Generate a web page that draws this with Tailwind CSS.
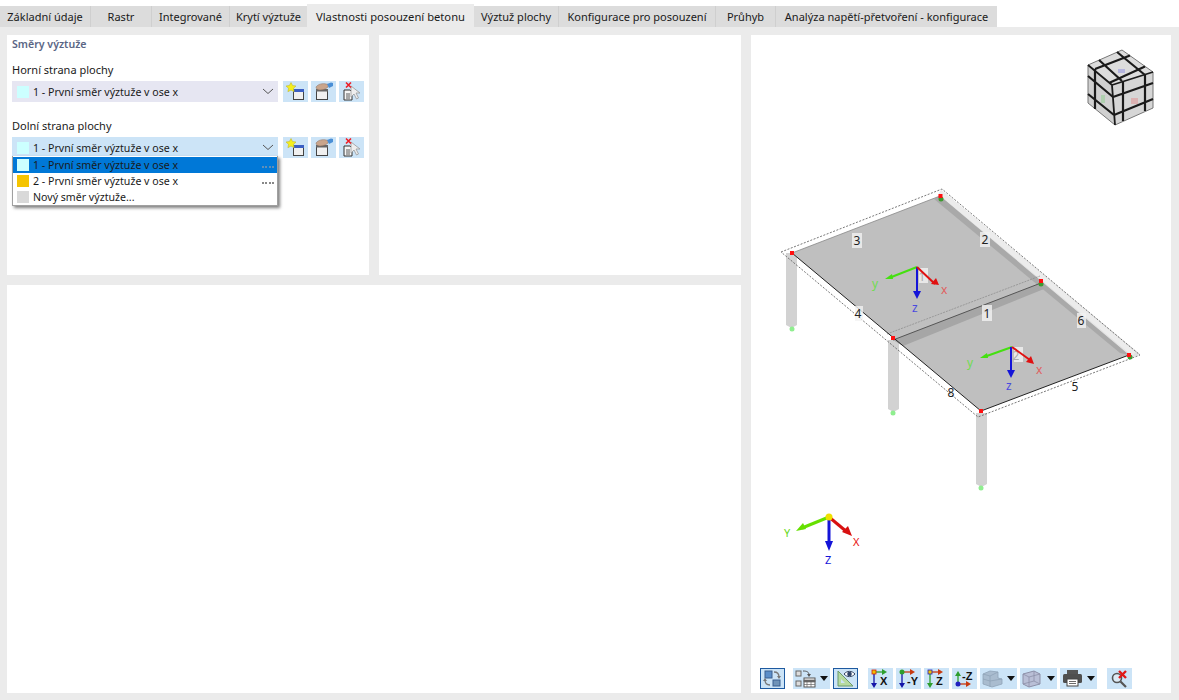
<!DOCTYPE html>
<html>
<head>
<meta charset="utf-8">
<script src="https://cdn.jsdelivr.net/npm/@tailwindcss/browser@4"></script>
</head>
<body class="m-0">
<div class="w-[1179px] h-[700px] flex flex-col bg-white overflow-hidden font-['Noto_Sans','Open_Sans',sans-serif] text-[11px] text-[#1a1a1a]">
  <!-- tabs -->
  <div class="h-[27px] flex items-end shrink-0">
    <div class="w-[91px] h-[21px] pt-[2px] bg-[#dcdcdc] border-r border-[#cfcfcf] flex items-center justify-center">Základní údaje</div>
    <div class="w-[61px] h-[21px] pt-[2px] bg-[#dcdcdc] border-r border-[#cfcfcf] flex items-center justify-center">Rastr</div>
    <div class="w-[78px] h-[21px] pt-[2px] bg-[#dcdcdc] border-r border-[#cfcfcf] flex items-center justify-center">Integrované</div>
    <div class="w-[77px] h-[21px] pt-[2px] bg-[#dcdcdc] flex items-center justify-center">Krytí výztuže</div>
    <div class="w-[167px] h-[23px] pt-[4px] bg-[#ebebeb] flex items-center justify-center text-[11.2px]">Vlastnosti posouzení betonu</div>
    <div class="w-[85px] h-[21px] pt-[2px] bg-[#dcdcdc] border-r border-[#cfcfcf] flex items-center justify-center">Výztuž plochy</div>
    <div class="w-[157px] h-[21px] pt-[2px] bg-[#dcdcdc] border-r border-[#cfcfcf] flex items-center justify-center">Konfigurace pro posouzení</div>
    <div class="w-[60px] h-[21px] pt-[2px] bg-[#dcdcdc] border-r border-[#cfcfcf] flex items-center justify-center">Průhyb</div>
    <div class="w-[221px] h-[21px] pt-[2px] bg-[#dcdcdc] flex items-center justify-center">Analýza napětí-přetvoření - konfigurace</div>
  </div>
  <!-- body -->
  <div class="flex-1 bg-[#ebebeb] flex gap-[10px] pt-[8px] pb-[7px] pl-[7px] pr-[8px]">
    <div class="w-[734px] flex flex-col gap-[10px]">
      <div class="h-[240px] flex gap-[10px]">
        <div class="w-[362px] bg-white relative px-[5px]">
          <div class="h-[17px] pt-[3px] flex items-center font-semibold text-[10.6px] text-[#5a6685]">Směry výztuže</div>
          <div class="mt-[8px] mb-[1px] h-[20px] flex items-center">Horní strana plochy</div>
          <div class="flex gap-[5px]">
            <div class="w-[266px] h-[21px] bg-[#e6e6f2] flex items-center pl-[5px] pr-[4px] text-[10.6px]">
              <span class="w-[12px] h-[12px] bg-[#ccffff] mr-[4px]"></span><span class="flex-1 pt-[2px]">1 - První směr výztuže v ose x</span>
              <svg width="12" height="7" viewBox="0 0 12 7"><path d="M1 1l5 4.500 5-4.500" fill="none" stroke="#555" stroke-width="1"/></svg>
            </div>
            <div class="flex gap-[3px]">
              <div class="w-[25px] h-[21px] bg-[#cce4f7]"><svg width="25" height="21" viewBox="0 0 25 21"><use href="#i-new"/></svg></div>
              <div class="w-[25px] h-[21px] bg-[#cce4f7]"><svg width="25" height="21" viewBox="0 0 25 21"><use href="#i-hand"/></svg></div>
              <div class="w-[25px] h-[21px] bg-[#cce4f7]"><svg width="25" height="21" viewBox="0 0 25 21"><use href="#i-del"/></svg></div>
            </div>
          </div>
          <div class="mt-[13px] mb-[1px] h-[21px] pt-[2px] flex items-center">Dolní strana plochy</div>
          <div class="flex gap-[5px]">
            <div class="w-[266px] h-[21px] bg-[#cce4f7] flex items-center pl-[5px] pr-[4px] text-[10.6px]">
              <span class="w-[12px] h-[12px] bg-[#ccffff] mr-[4px]"></span><span class="flex-1 pt-[2px]">1 - První směr výztuže v ose x</span>
              <svg width="12" height="7" viewBox="0 0 12 7"><path d="M1 1l5 4.500 5-4.500" fill="none" stroke="#555" stroke-width="1"/></svg>
            </div>
            <div class="flex gap-[3px]">
              <div class="w-[25px] h-[21px] bg-[#cce4f7]"><svg width="25" height="21" viewBox="0 0 25 21"><use href="#i-new"/></svg></div>
              <div class="w-[25px] h-[21px] bg-[#cce4f7]"><svg width="25" height="21" viewBox="0 0 25 21"><use href="#i-hand"/></svg></div>
              <div class="w-[25px] h-[21px] bg-[#cce4f7]"><svg width="25" height="21" viewBox="0 0 25 21"><use href="#i-del"/></svg></div>
            </div>
          </div>
          <!-- open dropdown list -->
          <div class="absolute left-[5px] top-[121px] w-[266px] h-[50px] bg-white border border-[#a0a0a0] border-t-0 pt-[1px] text-[10.6px] shadow-[2px_2px_3px_rgba(0,0,0,0.5)]">
            <div class="h-[16px] bg-[#0078d7] flex items-center pl-[4px] relative">
              <span class="w-[12px] h-[12px] bg-[#ccffff] mr-[4px]"></span><span class="pt-[2px]">1 - První směr výztuže v ose x</span>
              <span class="absolute right-[3px] top-[9px] w-[12px] h-[2px] border-t-2 border-dotted border-[#5f8fb8]"></span>
            </div>
            <div class="h-[16px] flex items-center pl-[4px] relative">
              <span class="w-[12px] h-[12px] bg-[#f5c400] mr-[4px]"></span><span class="pt-[2px]">2 - První směr výztuže v ose x</span>
              <span class="absolute right-[3px] top-[9px] w-[12px] h-[2px] border-t-2 border-dotted border-[#888]"></span>
            </div>
            <div class="h-[16px] flex items-center pl-[4px]">
              <span class="w-[12px] h-[12px] bg-[#d9d9d9] mr-[4px]"></span><span class="pt-[2px]">Nový směr výztuže...</span>
            </div>
          </div>
        </div>
        <div class="w-[362px] bg-white"></div>
      </div>
      <div class="flex-1 bg-white"></div>
    </div>
    <!-- right: 3D view -->
    <div class="w-[420px] bg-white flex flex-col">
      <svg class="block shrink-0" width="420" height="633" viewBox="751 35 420 633" font-family="'Noto Sans',sans-serif">
        <!-- columns -->
        <g fill="#d2d2d2">
          <path d="M786 253h11v72l-5.500 3-5.500-3z"/>
          <path d="M888 340h11v69l-5.500 3-5.500-3z"/>
          <path d="M976 413h11v71l-5.500 3-5.500-3z"/>
        </g>
        <g fill="#8fee8f"><circle cx="792" cy="329" r="2.500"/><circle cx="893" cy="413" r="2.500"/><circle cx="981" cy="488" r="2.500"/></g>
        <!-- right edge beam -->
        <path d="M941 190L1140 354L1131 358L938 196z" fill="#e2e2e2"/>
        <!-- slab -->
        <path d="M792 253L940 196L1129 355L981 411z" fill="#bfbfbf"/>
        <path d="M940 196L1129 355L1120 353L934 199z" fill="#a9a9a9"/>
        <path d="M940 192L1134 354" stroke="#ececec" stroke-width="5"/>
        <!-- cross beam -->
        <path d="M893 340L1041 283L1044 289L903 346z" fill="#a6a6a6"/>
        <path d="M893 340L1041 283" stroke="#555" stroke-width="1"/>
        <path d="M887 334L1040 276" stroke="#888" stroke-width="0.700" stroke-dasharray="2 1"/>
        <!-- outlines -->
        <path d="M792 253L981 411L1129 355" fill="none" stroke="#222" stroke-width="1"/>
        <path d="M792 253L940 196" stroke="#888" stroke-width="0.800"/>
        <path d="M781 252L942 189L1140 355L978 417z" fill="none" stroke="#555" stroke-width="0.800" stroke-dasharray="2 1.500"/>
        <!-- nodes -->
        <g fill="#3c9a2e"><circle cx="941" cy="199" r="2.500"/><circle cx="1041" cy="284" r="2.500"/><circle cx="1130" cy="357" r="2.500"/></g>
        <g fill="#ff1010"><rect x="790" y="251" width="4" height="4"/><rect x="938.500" y="194" width="4" height="4"/><rect x="1039" y="279" width="4" height="4"/><rect x="891" y="336" width="4" height="4"/><rect x="979" y="409" width="4" height="4"/><rect x="1127" y="353" width="4" height="4"/></g>
        <!-- member labels -->
        <g fill="#f2f2f2" fill-opacity="0.800">
          <rect x="852" y="233" width="10" height="15"/><rect x="980" y="232" width="10" height="15"/><rect x="982" y="305" width="10" height="16"/><rect x="1077" y="313" width="9" height="15"/><rect x="855" y="306" width="8" height="15"/><rect x="919" y="268" width="9" height="15"/><rect x="1014" y="347" width="9" height="15"/>
        </g>
        <g font-size="12" fill="#222" text-anchor="middle">
          <text x="857" y="245">3</text><text x="985" y="244">2</text><text x="987" y="318">1</text><text x="858" y="318">4</text><text x="1081" y="325">6</text><text x="1075" y="391">5</text><text x="951" y="397">8</text>
          <text x="922" y="281" fill="#aaa">1</text><text x="1016" y="360" fill="#aaa">2</text>
        </g>
        <!-- slab axes 1 -->
        <g stroke-width="2">
          <path d="M917 267L889 278" stroke="#44e010"/><path d="M917 267V293" stroke="#1414d8"/><path d="M917 267L935 284" stroke="#e01010"/>
        </g>
        <path d="M885 279L892 274L893 279z" fill="#44e010"/><path d="M917 299L913 291H921z" fill="#1414d8"/><path d="M939 285L931 284L936 278z" fill="#e01010"/>
        <g font-size="12">
          <text x="872" y="288" fill="#6fdc50">y</text><text x="941" y="294" fill="#e06060">x</text><text x="912" y="312" fill="#4a4ae0">z</text>
        </g>
        <!-- slab axes 2 -->
        <g stroke-width="2">
          <path d="M1012 347L984 357" stroke="#44e010"/><path d="M1011 347V372" stroke="#1414d8"/><path d="M1012 347L1030 360" stroke="#e01010"/>
        </g>
        <path d="M980 358L987 353L988 358z" fill="#44e010"/><path d="M1011 378L1007 370H1015z" fill="#1414d8"/><path d="M1034 364L1026 362L1031 356z" fill="#e01010"/>
        <g font-size="12">
          <text x="967" y="367" fill="#6fdc50">y</text><text x="1036" y="374" fill="#e06060">x</text><text x="1006" y="390" fill="#4a4ae0">z</text>
        </g>
        <!-- global axes -->
        <g stroke-width="3">
          <path d="M829 517L802 528" stroke="#66e000"/><path d="M829 517V543" stroke="#1414d8"/><path d="M829 517L847 532" stroke="#d81010"/>
        </g>
        <path d="M796 531L803 523L806 529z" fill="#66e000"/><path d="M829 551L825 541H833z" fill="#1414d8"/><path d="M852 536L842 532L848 526z" fill="#d81010"/>
        <circle cx="829" cy="517" r="3.500" fill="#f0e000"/>
        <g font-size="11">
          <text x="784" y="537" fill="#66d820">Y</text><text x="853" y="546" fill="#e81010">X</text><text x="825" y="564" fill="#1414d8">Z</text>
        </g>
        <!-- view cube -->
        <path d="M1088 65L1122 50L1153 72L1112 85z" fill="#dcdcdc"/>
        <path d="M1088 65L1112 85L1115 125L1088 103z" fill="#d0d0d0"/>
        <path d="M1112 85L1153 72L1153 108L1115 125z" fill="#d6d6d6"/>
        <path d="M1088 65L1122 50L1153 72L1153 108L1115 125L1088 103z" fill="none" stroke="#777" stroke-width="1"/>
        <g fill="none" stroke="#1a1a1a" stroke-width="2.200" stroke-linejoin="round">
          <path d="M1099 60L1122 81M1117 52L1145 75M1095 69L1130 55.500M1109 83L1145 66.500"/>
          <path d="M1095 69L1095 109M1088 76L1113 97M1088 94L1114 115"/>
          <path d="M1123 81L1123 121M1145 75L1145 111M1113 97L1153 83M1114 115L1153 99"/>
          <path d="M1088 65L1112 85L1153 72M1112 85L1115 125" stroke-width="1.800"/>
        </g>
        <g fill-opacity="0.600"><rect x="1118" y="69" width="7" height="4" fill="#9a9ae0"/><rect x="1101" y="95" width="4" height="8" fill="#9ad09a"/><rect x="1131" y="98" width="7" height="6" fill="#e09a9a"/></g>
      </svg>
      <!-- toolbar -->
      <div class="h-[21px] flex pl-[9px] shrink-0">
        <div class="w-[25px] h-[21px] bg-[#cce4f7] border border-[#1e5aa0] box-border"><svg class="-m-px" width="25" height="21" viewBox="0 0 25 21">
          <rect x="5" y="3" width="7" height="7" fill="#5b8ec9" stroke="#3a5f8f"/><rect x="13" y="12" width="7" height="6" fill="#6f93b8" stroke="#3a5f8f"/><path d="M14 4c3 0 5 1 5 5M5 12c0 3 2 5 5 5" fill="none" stroke="#777" stroke-width="1.300"/><path d="M17 8l2 3 2-3zM3 13l2-3 2 3z" fill="#777"/></svg></div>
        <div class="ml-[8px] w-[37px] h-[21px] bg-[#cce4f7] flex items-center"><svg width="25" height="21" viewBox="0 0 25 21">
          <rect x="3" y="3" width="5" height="5" fill="#ddd" stroke="#666"/><rect x="3" y="13" width="5" height="5" fill="#ddd" stroke="#666"/><rect x="11" y="10" width="11" height="9" fill="#fff" stroke="#555"/><path d="M11 12h11v2h-11zM14 12v7M18 12v7M11 16.500h11" fill="#666" stroke="#666" stroke-width="0.700"/><path d="M10 3c4 0 6 1 6 4" fill="none" stroke="#555"/><path d="M14 6l2 3 2-3z" fill="#555"/></svg><svg class="ml-[2px]" width="8" height="5" viewBox="0 0 8 5"><path d="M0 0h8L4 5z" fill="#111"/></svg></div>
        <div class="ml-[3px] w-[25px] h-[21px] bg-[#cce4f7] border border-[#1e5aa0] box-border"><svg class="-m-px" width="25" height="21" viewBox="0 0 25 21">
          <path d="M5 3V18H20z" fill="#b7dba0" stroke="#6d9a6d"/><path d="M8 11v4h4z" fill="#cce4f7"/><path d="M11 6c3-3.500 8-3.500 11 0-3 3.500-8 3.500-11 0z" fill="#fff" stroke="#3a4a66"/><circle cx="16.500" cy="6" r="2.300" fill="#2f4468"/></svg></div>
        <div class="ml-[10px] w-[25px] h-[21px] bg-[#cce4f7]"><svg width="25" height="21" viewBox="0 0 25 21">
          <path d="M6 4V17" stroke="#1414a8" stroke-width="1.300"/><path d="M6 20l-3-5h6z" fill="#1414a8"/><path d="M6 4H16" stroke="#2e9e2e" stroke-width="1.300"/><path d="M19 4l-5-3v6z" fill="#2e9e2e"/><rect x="4" y="2" width="4" height="4" fill="#f0c000" stroke="#d02010" stroke-width="0.800"/><text x="12" y="17" font-size="11" font-weight="700" fill="#111" font-family="'Liberation Sans',sans-serif">X</text></svg></div>
        <div class="ml-[3px] w-[25px] h-[21px] bg-[#cce4f7]"><svg width="25" height="21" viewBox="0 0 25 21">
          <path d="M6 4V17" stroke="#1414a8" stroke-width="1.300"/><path d="M6 20l-3-5h6z" fill="#1414a8"/><path d="M6 4H16" stroke="#c83a10" stroke-width="1.300"/><path d="M19 4l-5-3v6z" fill="#c83a10"/><circle cx="6" cy="4" r="2.500" fill="#2e9e2e"/><text x="11" y="17" font-size="11" font-weight="700" fill="#111" font-family="'Liberation Sans',sans-serif">-Y</text></svg></div>
        <div class="ml-[3px] w-[25px] h-[21px] bg-[#cce4f7]"><svg width="25" height="21" viewBox="0 0 25 21">
          <path d="M6 4V17" stroke="#2e9e2e" stroke-width="1.300"/><path d="M6 20l-3-5h6z" fill="#2e9e2e"/><path d="M6 4H16" stroke="#c83a10" stroke-width="1.300"/><path d="M19 4l-5-3v6z" fill="#c83a10"/><rect x="4" y="2" width="4" height="4" fill="#f0c000" stroke="#2020c0" stroke-width="0.800"/><text x="12" y="17" font-size="11" font-weight="700" fill="#111" font-family="'Liberation Sans',sans-serif">Z</text></svg></div>
        <div class="ml-[3px] w-[25px] h-[21px] bg-[#cce4f7]"><svg width="25" height="21" viewBox="0 0 25 21">
          <path d="M6 17V6" stroke="#2e9e2e" stroke-width="1.300"/><path d="M6 3l-3 5h6z" fill="#2e9e2e"/><path d="M6 16H16" stroke="#c83a10" stroke-width="1.300"/><path d="M19 16l-5-3v6z" fill="#c83a10"/><circle cx="6" cy="16" r="2.500" fill="#2020c0"/><text x="10" y="12" font-size="11" font-weight="700" fill="#111" font-family="'Liberation Sans',sans-serif">-Z</text></svg></div>
        <div class="ml-[3px] w-[37px] h-[21px] bg-[#cce4f7] flex items-center"><svg width="25" height="21" viewBox="0 0 25 21">
          <path d="M3 6L10 3L18 4V10L22 11V16L12 19L3 16z" fill="#a9bccf" stroke="#8fa3b8" stroke-width="0.800"/><path d="M3 6L10 8V13L22 11M10 8L18 4M10 13V19M3 11L10 13" fill="none" stroke="#8fa3b8" stroke-width="0.800"/></svg><svg class="ml-[2px]" width="8" height="5" viewBox="0 0 8 5"><path d="M0 0h8L4 5z" fill="#111"/></svg></div>
        <div class="ml-[3px] w-[37px] h-[21px] bg-[#cce4f7] flex items-center"><svg width="25" height="21" viewBox="0 0 25 21">
          <path d="M3 6L14 3L20 6V16L9 19L3 16z" fill="#b9bfd6" stroke="#8d90a8"/><path d="M3 6L9 9L20 6M9 9V19M3 16L14 13L20 16M14 3V13" fill="none" stroke="#8d90a8" stroke-width="0.800"/></svg><svg class="ml-[2px]" width="8" height="5" viewBox="0 0 8 5"><path d="M0 0h8L4 5z" fill="#111"/></svg></div>
        <div class="ml-[3px] w-[37px] h-[21px] bg-[#cce4f7] flex items-center"><svg width="25" height="21" viewBox="0 0 25 21">
          <path d="M7 2h11v4H7z" fill="#555"/><rect x="3" y="6" width="19" height="9" rx="1.500" fill="#4f4f4f"/><rect x="7" y="11" width="11" height="7" fill="#fff" stroke="#444"/><path d="M9 13.500h7M9 15.500h7" stroke="#444" stroke-width="0.800"/></svg><svg class="ml-[2px]" width="8" height="5" viewBox="0 0 8 5"><path d="M0 0h8L4 5z" fill="#111"/></svg></div>
        <div class="ml-[10px] w-[25px] h-[21px] bg-[#cce4f7]"><svg width="25" height="21" viewBox="0 0 25 21">
          <circle cx="10" cy="10" r="4.500" fill="#ddeaf5" stroke="#555" stroke-width="1.600"/><path d="M13.500 13.500L19 19" stroke="#555" stroke-width="2.200"/><path d="M12 3l7 7M19 3l-7 7" stroke="#e01818" stroke-width="2.400"/></svg></div>
      </div>
    </div>
  </div>
</div>
<svg width="0" height="0" class="absolute">
  <defs>
    <g id="i-new">
      <rect x="10.500" y="8.500" width="10" height="10" fill="#f0f0f0" stroke="#444"/><rect x="10" y="8" width="11" height="3" fill="#3b5fc4"/>
      <path d="M8 1.500l1.600 3 3.400.5-2.500 2.300.6 3.400L8 9.100 4.900 10.700l.6-3.400L3 5l3.400-.5z" fill="#f5ee1e" stroke="#b8b020" stroke-width="0.500"/>
    </g>
    <g id="i-hand">
      <rect x="5.500" y="8.500" width="11" height="10" fill="#f0f0f0" stroke="#444"/><rect x="5" y="8" width="12" height="2.500" fill="#666"/>
      <path d="M5 6c2-3 7-4 10-3 2 0 3 1 2 3-2 2-5 3-8 3-2 0-4-1-4-3z" fill="#c9a58c" stroke="#8b6b58" stroke-width="0.500"/>
      <path d="M16 3l4-1.500 2 .5v3l-4 2z" fill="#4a8fd6"/>
    </g>
    <g id="i-del">
      <path d="M5 9h6l2 2v8H5z" fill="#f5f5f5" stroke="#333"/><path d="M7 13h4M7 15h4M7 17h4" stroke="#333" stroke-width="0.800"/>
      <path d="M12 5v11l3-3 2.500 5 2-1-2.500-5h4z" fill="#eee" stroke="#999" stroke-width="0.800"/>
      <path d="M7 1.500l5 5M12 1.500l-5 5" stroke="#ee1c24" stroke-width="1.600"/>
    </g>
  </defs>
</svg>
</body>
</html>
